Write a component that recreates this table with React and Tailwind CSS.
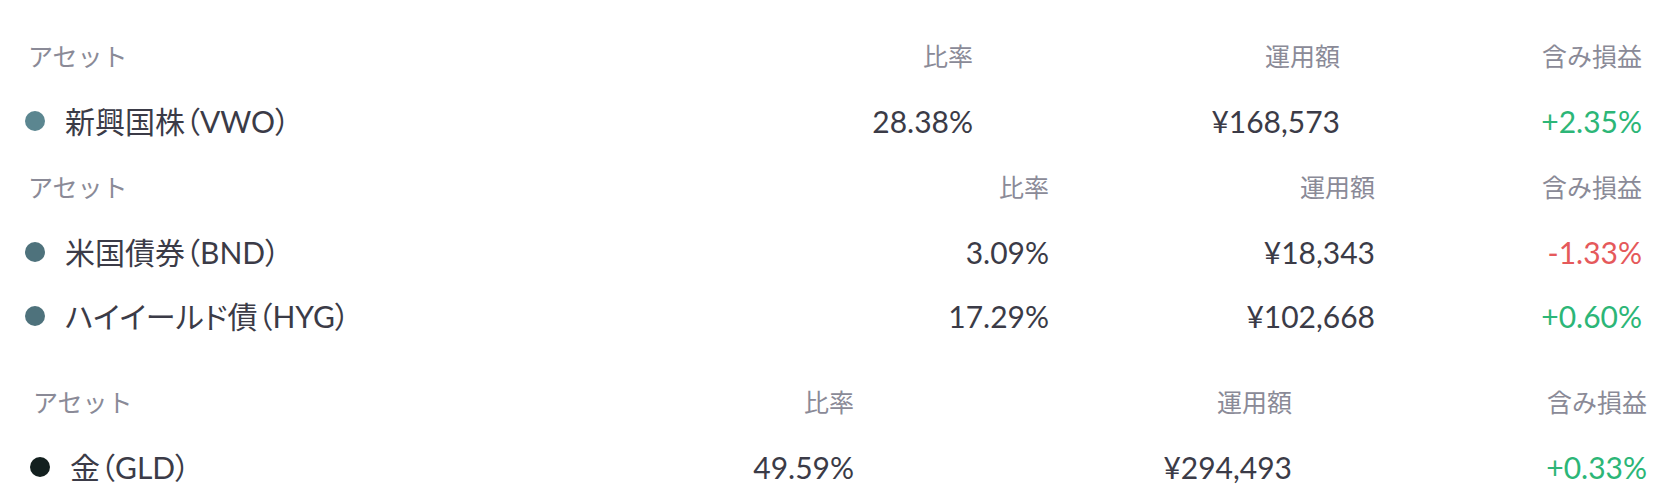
import React from "react";

const FONT = { fontFamily: "Lato, 'Noto Sans CJK JP', sans-serif" };

function Header({ cols }) {
  return (
    <div className={`grid ${cols} h-[64px] items-center text-[25px] text-[#8a8a97]`}>
      <div className="pl-[3px]">アセット</div>
      <div className="text-right">比率</div>
      <div className="text-right">運用額</div>
      <div className="text-right">含み損益</div>
    </div>
  );
}

function Row({ cols, dot, name, code, ratio, amount, pl, positive }) {
  return (
    <div className={`grid ${cols} h-[64px] items-center text-[30px] text-[#3b3b47]`}>
      <div className="flex items-center gap-[20px]">
        <span className={`w-[20px] h-[20px] rounded-full shrink-0 ${dot}`}></span>
        <span className="[font-feature-settings:'palt']">
          {name}
          <span style={{ fontFamily: "'Noto Sans CJK JP', sans-serif" }}>（</span>
          {code}
          <span style={{ fontFamily: "'Noto Sans CJK JP', sans-serif" }}>）</span>
        </span>
      </div>
      <div className="text-right">{ratio}</div>
      <div className="text-right">{amount}</div>
      <div className={`text-right ${positive ? "text-[#2cb677]" : "text-[#e5595b]"}`}>{pl}</div>
    </div>
  );
}

export default function App() {
  const c1 = "grid-cols-[1fr_200px_367px_302px]";
  const c2 = "grid-cols-[1fr_200px_326px_267px]";
  const c3 = "grid-cols-[1fr_200px_438px_355px]";
  return (
    <div className="w-[1674px] h-[504px] bg-white overflow-hidden" style={FONT}>
      <div className="pt-[25px] pl-[25px] pr-[32px]">
        <Header cols={c1} />
        <Row cols={c1} dot="bg-[#5b8690]" name="新興国株" code="VWO" ratio="28.38%" amount="¥168,573" pl="+2.35%" positive />
      </div>
      <div className="pt-[3px] pl-[25px] pr-[32px]">
        <Header cols={c2} />
        <Row cols={c2} dot="bg-[#4e727c]" name="米国債券" code="BND" ratio="3.09%" amount="¥18,343" pl="-1.33%" />
        <Row cols={c2} dot="bg-[#4e727c]" name="ハイイールド債" code="HYG" ratio="17.29%" amount="¥102,668" pl="+0.60%" positive />
      </div>
      <div className="pt-[23px] pl-[30px] pr-[27px]">
        <Header cols={c3} />
        <Row cols={c3} dot="bg-[#13201f]" name="金" code="GLD" ratio="49.59%" amount="¥294,493" pl="+0.33%" positive />
      </div>
    </div>
  );
}
